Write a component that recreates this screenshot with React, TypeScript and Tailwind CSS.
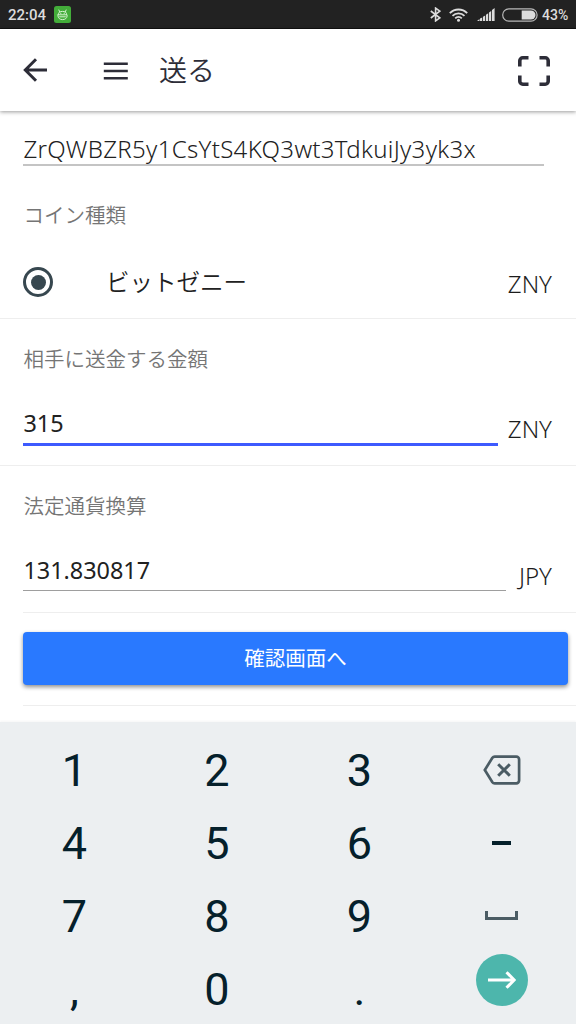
import type { ReactNode } from "react";

const KEYS = ["1", "2", "3", "del", "4", "5", "6", "–", "7", "8", "9", "space", ",", "0", ".", "go"];

function StatusBar() {
  return (
    <div className="flex h-[29px] shrink-0 items-center bg-[#222222] pl-[8px] pr-[8px] font-['Roboto',sans-serif] text-[#dcdcdc] border-b border-[#111111]">
      <span className="w-[39px] pt-[2px] whitespace-nowrap text-[15px] font-medium leading-none">22:04</span>
      <svg className="ml-[7px]" width="17" height="17" viewBox="0 0 17 17" fill="none">
        <rect width="17" height="17" rx="2.5" fill="#43ad3a" />
        <g stroke="#d5f3d0" strokeWidth="1" strokeLinecap="round">
          <path d="M4.4 8.4C4.4 6.4 5.6 5.4 8.5 5.4s4.1 1 4.1 3M5.6 5.6L4.9 4M11.4 5.6l.7-1.6" />
          <path d="M3.9 8.8h9.2v1c0 2.3-1.9 3.8-4.6 3.8s-4.6-1.5-4.6-3.8zM5.6 10.8h5.8" />
          <path d="M6.8 7.2v.1M10.2 7.2v.1" strokeWidth="1.2" />
        </g>
      </svg>
      <div className="ml-auto flex items-center pt-px">
        <svg width="11" height="15" viewBox="0 0 11 15" fill="none" stroke="#dcdcdc" strokeWidth="1.6">
          <path d="M.8 4l9 6.9-4.2 3V1.1l4.2 3-9 6.9" />
        </svg>
        <svg className="ml-[8px]" width="19" height="14" viewBox="0 0 19 14" fill="none" stroke="#dcdcdc" strokeWidth="1.8">
          <path d="M.8 5.1a12.3 12.3 0 0 1 17.4 0M3.5 7.8a8.5 8.5 0 0 1 12 0M6.2 10.3a4.7 4.7 0 0 1 6.6 0" />
          <circle cx="9.5" cy="12.3" r="1.5" fill="#dcdcdc" stroke="none" />
        </svg>
        <svg className="ml-[9px]" width="18" height="13" viewBox="0 0 18 13" fill="#dcdcdc">
          <path d="M0 13l2.5-2V13zM3 10.6l2.2-1.2V13H3zM6 8.8l2.2-1.2V13H6zM9 6.7l2.2-1.4V13H9zM12 4.4l2.2-1.5V13H12zM15 1.9L17.6 0V13H15z" />
        </svg>
        <svg className="ml-[7px]" width="36" height="14" viewBox="0 0 36 14">
          <rect x=".7" y=".9" width="34.4" height="12.2" rx="6.1" fill="none" stroke="#b8b8b8" strokeWidth="1.2" />
          <path d="M19.7 2.4h9.2a4.6 4.6 0 0 1 0 9.2h-9.2z" fill="#dcdcdc" />
        </svg>
        <span className="ml-[4px] w-[26px] pt-px whitespace-nowrap text-[14px] font-medium leading-none">43%</span>
      </div>
    </div>
  );
}

function Header() {
  return (
    <header className="relative flex h-[82px] shrink-0 items-center bg-white pl-[23px] pr-[26px] pt-px text-[#2d2d38] shadow-[0_1px_4px_rgba(0,0,0,0.4)]">
      <svg className="mb-px" width="24" height="24" viewBox="0 0 24 24" fill="none" stroke="currentColor" strokeWidth="3">
        <path d="M24 12H2.5M13 1.3L2.3 12 13 22.7" />
      </svg>
      <svg className="ml-[56px]" width="25" height="18" viewBox="0 0 25 18" fill="none" stroke="currentColor" strokeWidth="2.5">
        <path d="M.8 1.7h24M.8 9h24M.8 16.3h24" />
      </svg>
      <h1 className="ml-[31px] -mt-px text-[28px] font-[350] leading-none">送る</h1>
      <svg className="ml-auto" width="32" height="30" viewBox="0 0 32 30" fill="none" stroke="currentColor" strokeWidth="3.6">
        <path d="M1.8 10.5V4.8a3 3 0 0 1 3-3h5.7M21.5 1.8h5.7a3 3 0 0 1 3 3v5.7M30.2 19.5v5.7a3 3 0 0 1-3 3h-5.7M10.5 28.2H4.8a3 3 0 0 1-3-3v-5.7" />
      </svg>
    </header>
  );
}

function Label({ children }: { children: ReactNode }) {
  return <div className="text-[20.5px] font-[350] leading-[30px] text-[#757575]">{children}</div>;
}

function Unit({ children }: { children: ReactNode }) {
  return <span className="text-[24px] font-[350] leading-[30px] text-[#1c1c1c]">{children}</span>;
}

function KeyFace({ name }: { name: string }) {
  if (name === "del") {
    return (
      <svg className="mb-[2px]" width="38" height="30" viewBox="0 0 38 30" fill="none" stroke="#4b5c64" strokeWidth="2.7">
        <path d="M11.7 1.6h21.6a2.8 2.8 0 0 1 2.8 2.8v21.2a2.8 2.8 0 0 1-2.8 2.8H11.7a2.8 2.8 0 0 1-2.3-1.2L1.8 15l7.6-12.2a2.8 2.8 0 0 1 2.3-1.2z" />
        <path d="M15.2 9.3l11.6 11.4M26.8 9.3L15.2 20.7" strokeWidth="3" />
      </svg>
    );
  }
  if (name === "–") {
    return <span className="mb-[2px] h-[4px] w-[19px] bg-[#05202b]" />;
  }
  if (name === "space") {
    return <span className="mb-[3px] h-[9px] w-[33px] border-x-3 border-b-3 border-[#4b5c64]" />;
  }
  if (name === "go") {
    return (
      <span className="mb-[20px] flex size-[52px] items-center justify-center rounded-full bg-[#4db6ac]">
        <svg width="28" height="18" viewBox="0 0 28 18" fill="none" stroke="#ffffff" strokeWidth="3">
          <path d="M0 9h26M18.5 1.2L26.2 9l-7.7 7.8" />
        </svg>
      </span>
    );
  }
  return <span>{name}</span>;
}

export default function App() {
  return (
    <div className="flex h-[1024px] w-[576px] flex-col overflow-hidden bg-white font-['Noto_Sans','Noto_Sans_CJK_JP',sans-serif]">
      <StatusBar />
      <Header />

      <main className="h-[611px] shrink-0 text-[#212121]">
        <section className="h-[208px] border-b border-[#eeeeee] pl-[23.4px] pr-[24px]">
          <div className="h-[55px] w-[520.6px] border-b-2 border-[#c4c4c4] pt-[21px] text-[24px] font-[350] leading-[33px] tracking-[0.32px] whitespace-nowrap">
            ZrQWBZR5y1CsYtS4KQ3wt3TdkuiJy3yk3x
          </div>
          <div className="pt-[34px]"><Label>コイン種類</Label></div>
          <div className="flex items-center pt-[35px]">
            <span className="flex size-[30px] items-center justify-center rounded-full border-3 border-[#37474f]">
              <span className="size-[15px] rounded-full bg-[#37474f]" />
            </span>
            <span className="ml-[52.5px] text-[23.5px] font-[350] leading-[30px]">ビットゼニー</span>
            <span className="ml-auto pt-[4px]"><Unit>ZNY</Unit></span>
          </div>
        </section>

        <section className="h-[147px] border-b border-[#eeeeee] pl-[23.4px] pr-[24px] pt-[25px]">
          <Label>相手に送金する金額</Label>
          <div className="flex justify-between pt-[30px]">
            <div className="h-[42px] w-[475px] border-b-3 border-[#3d5afe] pt-[3px] text-[23.4px] leading-[33px]">315</div>
            <span className="pt-[10px]"><Unit>ZNY</Unit></span>
          </div>
        </section>

        <section className="ml-[23.4px] h-[147px] border-b border-[#eeeeee] pr-[24px] pt-[25px]">
          <Label>法定通貨換算</Label>
          <div className="flex justify-between pt-[30px]">
            <div className="h-[40px] w-[482.5px] border-b border-[#9e9e9e] pt-[3px] text-[23.4px] leading-[33px]">131.830817</div>
            <span className="pt-[10px]"><Unit>JPY</Unit></span>
          </div>
        </section>

        <div className="ml-[23.4px] h-[93px] border-b border-[#eeeeee] pr-[8.5px] pt-[19px]">
          <button className="h-[53px] w-full rounded-[4px] bg-[#2979ff] text-[20.5px] leading-none text-white shadow-[0_2px_4px_rgba(0,0,0,0.45)]">
            確認画面へ
          </button>
        </div>
      </main>

      <div className="grid h-[302px] shrink-0 auto-rows-[73px] grid-cols-[repeat(4,142.5px)] bg-[#eceff1] pl-[3.1px] pt-[12px] font-['Roboto',sans-serif] text-[45px] leading-none text-[#05202b] shadow-[0_-1px_2px_rgba(0,0,0,0.04)]">
        {KEYS.map((name) => (
          <div key={name} className="flex items-center justify-center">
            <KeyFace name={name} />
          </div>
        ))}
      </div>
    </div>
  );
}
